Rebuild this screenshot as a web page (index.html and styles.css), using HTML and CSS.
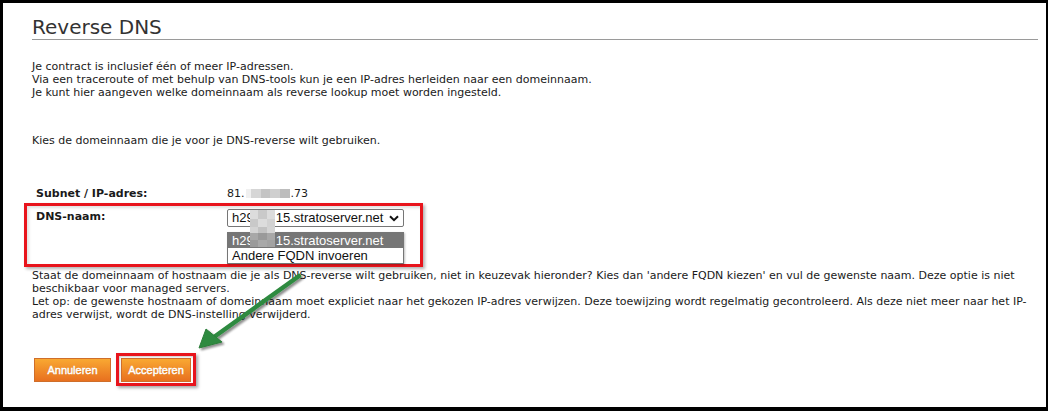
FILE: index.html
```html
<!DOCTYPE html>
<html lang="nl">
<head>
<meta charset="utf-8">
<title>Reverse DNS</title>
<link rel="stylesheet" href="styles.css">
</head>
<body>
<div class="frame">
  <div class="content">
    <h1 class="title">Reverse DNS</h1>
    <p class="intro">Je contract is inclusief één of meer IP-adressen.<br>Via een traceroute of met behulp van DNS-tools kun je een IP-adres herleiden naar een domeinnaam.<br>Je kunt hier aangeven welke domeinnaam als reverse lookup moet worden ingesteld.</p>
    <p class="choose">Kies de domeinnaam die je voor je DNS-reverse wilt gebruiken.</p>

    <div class="row">
      <div class="label">Subnet / IP-adres:</div>
      <div class="value">81.<span class="ipblur"><i class="t1"></i><i class="t2"></i><i class="t3"></i><i class="t4"></i><i class="t5"></i></span>.73</div>
    </div>

    <div class="row dnsrow">
      <div class="label">DNS-naam:</div>
      <div class="selectwrap">
        <div class="select">h29<span class="gap"></span>15.stratoserver.net
          <svg class="chev" width="10" height="7" viewBox="0 0 10 7"><path d="M1 1.2 L5 5.2 L9 1.2" fill="none" stroke="#111" stroke-width="2"/></svg>
        </div>
        <div class="menu">
          <div class="opt sel">h29<span class="gap"></span>15.stratoserver.net</div>
          <div class="opt">Andere FQDN invoeren</div>
        </div>
        <div class="blur">
          <i class="b a"></i><i class="b c"></i><i class="b a"></i>
          <i class="b c"></i><i class="b a"></i><i class="b d"></i>
          <i class="b i"></i><i class="b j"></i><i class="b i"></i>
          <i class="b e"></i><i class="b f"></i><i class="b e"></i>
          <i class="b f"></i><i class="b e"></i><i class="b g"></i>
        </div>
      </div>
    </div>

    <p class="note">Staat de domeinnaam of hostnaam die je als DNS-reverse wilt gebruiken, niet in keuzevak hieronder? Kies dan 'andere FQDN kiezen' en vul de gewenste naam. Deze optie is niet beschikbaar voor managed servers.<br>Let op: de gewenste hostnaam of domeinnaam moet expliciet naar het gekozen IP-adres verwijzen. Deze toewijzing wordt regelmatig gecontroleerd. Als deze niet meer naar het IP-adres verwijst, wordt de DNS-instelling verwijderd.</p>

    <div class="buttons">
      <button class="btn cancel">Annuleren</button>
      <div class="highlight"><button class="btn accept">Accepteren</button></div>
    </div>
  </div>

  <svg class="arrow" width="1048" height="411" viewBox="0 0 1048 411">
    <defs>
      <filter id="sh" x="-20%" y="-20%" width="140%" height="140%">
        <feGaussianBlur in="SourceAlpha" stdDeviation="1.2"/>
        <feOffset dx="2" dy="2" result="o"/>
        <feComponentTransfer><feFuncA type="linear" slope="0.45"/></feComponentTransfer>
        <feMerge><feMergeNode/><feMergeNode in="SourceGraphic"/></feMerge>
      </filter>
    </defs>
    <g filter="url(#sh)">
      <line x1="299" y1="276" x2="214" y2="337" stroke="#2f8a40" stroke-width="4.5" stroke-linecap="round"/>
      <polygon points="199,348 206,329 222,342" fill="#2f8a40" stroke="#2a7d39" stroke-width="1" stroke-linejoin="round"/>
    </g>
  </svg>
</div>
</body>
</html>
```

FILE: styles.css
```css
html, body {
  margin: 0;
  padding: 0;
  background: #fff;
}

.frame {
  position: relative;
  width: 1048px;
  height: 411px;
  box-sizing: border-box;
  border-style: solid;
  border-color: #000;
  border-width: 3px 2px 4px 3px;
  background: #fff;
  overflow: hidden;
}

.content {
  padding: 0 8px 0 29px;
  font-family: "DejaVu Sans", Verdana, sans-serif;
  font-size: 11px;
  line-height: 13px;
  color: #1a1a1a;
}

.title {
  margin: 12px 0 0 0;
  padding: 0;
  font-family: "DejaVu Sans", Verdana, sans-serif;
  font-size: 20px;
  font-weight: normal;
  line-height: 24px;
  color: #333;
  border-bottom: 1px solid #9a9a9a;
}

.intro {
  margin: 20px 0 0 0;
}

.choose {
  margin: 35px 0 0 0;
}

.row {
  display: flex;
  align-items: flex-start;
}

.choose + .row {
  margin-top: 40px;
  padding-left: 4px;
}

.label {
  width: 191px;
  flex: none;
  font-weight: bold;
}

.value {
  white-space: nowrap;
}

.ipblur {
  display: inline-flex;
  width: 44px;
  height: 9px;
  vertical-align: -1px;
  margin: 0 1px;
}

.ipblur i {
  display: block;
  height: 9px;
}

.ipblur .t1 { width: 5px; background: #f0f0f0; }
.ipblur .t2 { width: 10px; background: #d6d6d6; }
.ipblur .t3 { width: 9px; background: #c4c4c4; }
.ipblur .t4 { width: 10px; background: #cfcfcf; }
.ipblur .t5 { width: 10px; background: #bdbdbd; }

.dnsrow {
  margin: 3px 0 0 -8px;
  width: 399px;
  height: 64px;
  box-sizing: border-box;
  border: 3px solid #e8141c;
  padding-left: 9px;
  box-shadow: 2px 2px 3px rgba(0, 0, 0, 0.3), inset 2px 2px 3px rgba(0, 0, 0, 0.12);
}

.dnsrow .label {
  padding-top: 4px;
}

.selectwrap {
  position: relative;
  margin-top: 3px;
}

.select {
  position: relative;
  width: 177px;
  height: 18px;
  box-sizing: border-box;
  border: 1px solid #767676;
  border-radius: 2px;
  padding-left: 4px;
  font-family: "Liberation Sans", Arial, sans-serif;
  font-size: 13px;
  line-height: 16px;
  color: #111;
  background: #fff;
  white-space: nowrap;
}

.gap {
  display: inline-block;
  width: 22px;
}

.chev {
  position: absolute;
  right: 4px;
  top: 5px;
}

.menu {
  position: absolute;
  left: 0;
  top: 23px;
  width: 177px;
  box-sizing: border-box;
  border: 1px solid #767676;
  background: #fff;
  box-shadow: 1px 1px 2px rgba(0, 0, 0, 0.25);
  font-family: "Liberation Sans", Arial, sans-serif;
  font-size: 13px;
  line-height: 15px;
  color: #111;
  white-space: nowrap;
}

.opt {
  height: 15px;
  padding-left: 4px;
}

.opt.sel {
  background: #767676;
  color: #fff;
}

.blur {
  position: absolute;
  left: 23px;
  top: 1px;
  width: 25px;
  height: 37px;
  display: grid;
  grid-template-columns: 8px 9px 8px;
  grid-template-rows: 9px 8px 6px 7px 7px;
}

.blur .b { display: block; }
.blur .a { background: #dcdcdc; }
.blur .c { background: #c9c9c9; }
.blur .d { background: #d2d2d2; }
.blur .e { background: #a8a8a8; }
.blur .f { background: #9a9a9a; }
.blur .g { background: #a2a2a2; }
.blur .i { background: #d4d4d4; }
.blur .j { background: #c2c2c2; }

.note {
  margin: 2px 0 0 0;
}

.buttons {
  display: flex;
  align-items: flex-start;
  margin-top: 32px;
  padding-left: 2px;
}

.btn {
  display: block;
  height: 24px;
  box-sizing: border-box;
  border: 1px solid #cf6e2a;
  background: linear-gradient(#f9a832, #e8701f);
  color: #fff;
  font-family: "Liberation Sans", Arial, sans-serif;
  font-size: 11px;
  line-height: 20px;
  padding: 0;
  -webkit-text-stroke: 0.45px #fff;
  text-shadow: 0 0 1px rgba(120, 50, 0, 0.4);
  cursor: pointer;
}

.cancel {
  width: 77px;
  margin-top: 5px;
}

.highlight {
  margin-left: 5px;
  width: 80px;
  height: 33px;
  box-sizing: border-box;
  border: 3px solid #e8141c;
  padding: 2px 2px 1px 2px;
  box-shadow: 2px 2px 3px rgba(0, 0, 0, 0.35), inset 1px 1px 2px rgba(0, 0, 0, 0.2);
}

.accept {
  width: 70px;
  line-height: 22px;
}

.arrow {
  position: absolute;
  left: -3px;
  top: -3px;
  pointer-events: none;
}
```
